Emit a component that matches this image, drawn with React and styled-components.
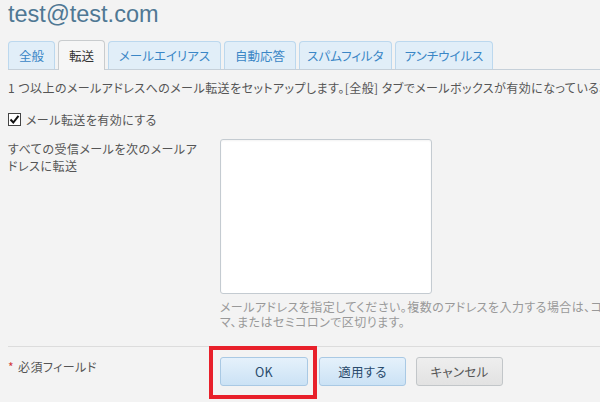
import React from 'react';
import styled, { createGlobalStyle } from 'styled-components';

const GlobalStyle = createGlobalStyle`
  html, body {
    margin: 0;
    padding: 0;
    background: #f3f3f3;
    overflow: hidden;
  }
  body {
    font-family: "Noto Sans CJK JP", "Liberation Sans", sans-serif;
    font-feature-settings: "palt";
    color: #555;
  }
`;

const Page = styled.div`
  width: 600px;
  height: 402px;
  padding-left: 8px;
  box-sizing: border-box;
  overflow: hidden;
`;

const Title = styled.h1`
  margin: 0;
  height: 30px;
  line-height: 28px;
  font-family: "Liberation Sans", Arial, sans-serif;
  font-weight: normal;
  font-size: 23.5px;
  color: #4f7894;
`;

const TabBar = styled.div`
  display: flex;
  align-items: flex-end;
  gap: 3px;
  margin-top: 10px;
  height: 29px;
  border-bottom: 1px solid #c6d0d9;
  width: 700px;
`;

const Tab = styled.div`
  box-sizing: border-box;
  padding: 0 ${(p) => p.$pad || 10}px;
  display: flex;
  align-items: center;
  justify-content: center;
  font-size: 12.5px;
  border: 1px solid ${(p) => (p.$active ? '#c9ccce' : '#bcd8ee')};
  border-bottom: none;
  border-radius: 4px 4px 0 0;
  background: ${(p) => (p.$active ? '#f6f6f6' : '#e1eef8')};
  color: ${(p) => (p.$active ? '#333' : '#3a86c6')};
  margin-bottom: ${(p) => (p.$active ? '-1px' : '0')};
  height: ${(p) => (p.$active ? '30px' : '28px')};
`;

const Description = styled.p`
  margin: 10px 0 0;
  line-height: 16px;
  font-size: 12px;
  letter-spacing: 0.45px;
  color: #555;
  white-space: nowrap;
`;

const CheckRow = styled.label`
  display: flex;
  align-items: center;
  gap: 5px;
  margin-top: 15px;
  height: 16px;
  font-size: 12px;
  letter-spacing: 0.45px;
  color: #555;
`;

const CheckBox = styled.span`
  width: 13px;
  height: 13px;
  box-sizing: border-box;
  border: 1px solid #444;
  background: #fff;
  display: flex;
  align-items: center;
  justify-content: center;
`;

const FormRow = styled.div`
  display: grid;
  grid-template-columns: 212px 212px;
  margin-top: 12px;
`;

const FieldLabel = styled.div`
  font-size: 12px;
  line-height: 17px;
  letter-spacing: 0.5px;
  color: #555;
  padding-top: 1px;
  white-space: nowrap;
`;

const AddressBox = styled.textarea`
  width: 212px;
  height: 155px;
  box-sizing: border-box;
  border: 1px solid #c4cbd1;
  border-radius: 3px;
  background: #fff;
  resize: none;
  margin: 0;
  display: block;
  box-shadow: inset 0 1px 2px rgba(0, 0, 0, 0.05);
`;

const Hint = styled.div`
  margin: 5px 0 0 212px;
  font-size: 12px;
  line-height: 15px;
  letter-spacing: 0.45px;
  color: #999;
`;

const HintLine = styled.div`
  white-space: nowrap;
`;

const Divider = styled.div`
  margin-top: 17px;
  height: 1px;
  width: 700px;
  background: #dcdcdc;
`;

const Footer = styled.div`
  display: flex;
  align-items: flex-start;
  padding-top: 10px;
`;

const Required = styled.div`
  width: 212px;
  font-size: 12px;
  line-height: 20px;
  letter-spacing: 0.45px;
  color: #555;
`;

const Star = styled.span`
  color: #d23b3b;
  margin-right: 4px;
`;

const Buttons = styled.div`
  display: flex;
  gap: 10px;
`;

const Button = styled.button`
  width: ${(p) => p.$w || 87}px;
  height: 29px;
  box-sizing: border-box;
  border-radius: 3px;
  font-family: "Noto Sans CJK JP", "Liberation Sans", sans-serif;
  font-feature-settings: "palt";
  font-size: 12.5px;
  letter-spacing: 0.3px;
  padding: 0;
  border: 1px solid ${(p) => (p.$primary ? '#a9c9e4' : '#c2c6c9')};
  background: ${(p) =>
    p.$primary
      ? 'linear-gradient(180deg, #e5f1fb 0%, #cbe2f5 100%)'
      : 'linear-gradient(180deg, #eeeeee 0%, #e2e2e2 100%)'};
  color: ${(p) => (p.$primary ? '#294a6c' : '#555')};
`;

const Highlight = styled.div`
  position: relative;
  margin-right: 1px;

  &::after {
    content: '';
    position: absolute;
    top: -11px;
    left: -11px;
    right: -9px;
    bottom: -13px;
    border: 4px solid #e8202a;
    pointer-events: none;
  }
`;

const tabs = [
  { label: '全般' },
  { label: '転送', active: true },
  { label: 'メールエイリアス' },
  { label: '自動応答' },
  { label: 'スパムフィルタ', pad: 7 },
  { label: 'アンチウイルス', pad: 9 },
];

export default function App() {
  return (
    <Page>
      <GlobalStyle />
      <Title>test@test.com</Title>
      <TabBar>
        {tabs.map((t) => (
          <Tab key={t.label} $active={t.active} $pad={t.pad}>
            {t.label}
          </Tab>
        ))}
      </TabBar>
      <Description>
        1 つ以上のメールアドレスへのメール転送をセットアップします。[全般] タブでメールボックスが有効になっている場合
      </Description>
      <CheckRow>
        <CheckBox>
          <svg width="11" height="11" viewBox="0 0 11 11">
            <path d="M1.5 5.5 L4.3 8.5 L9.5 1.8" fill="none" stroke="#111" strokeWidth="2" />
          </svg>
        </CheckBox>
        メール転送を有効にする
      </CheckRow>
      <FormRow>
        <FieldLabel>
          すべての受信メールを次のメールア
          <br />
          ドレスに転送
        </FieldLabel>
        <AddressBox />
      </FormRow>
      <Hint>
        <HintLine>メールアドレスを指定してください。複数のアドレスを入力する場合は、コ</HintLine>
        <HintLine>マ、またはセミコロンで区切ります。</HintLine>
      </Hint>
      <Divider />
      <Footer>
        <Required>
          <Star>*</Star>必須フィールド
        </Required>
        <Buttons>
          <Highlight>
            <Button $primary $w={88}>OK</Button>
          </Highlight>
          <Button $primary>適用する</Button>
          <Button>キャンセル</Button>
        </Buttons>
      </Footer>
    </Page>
  );
}
